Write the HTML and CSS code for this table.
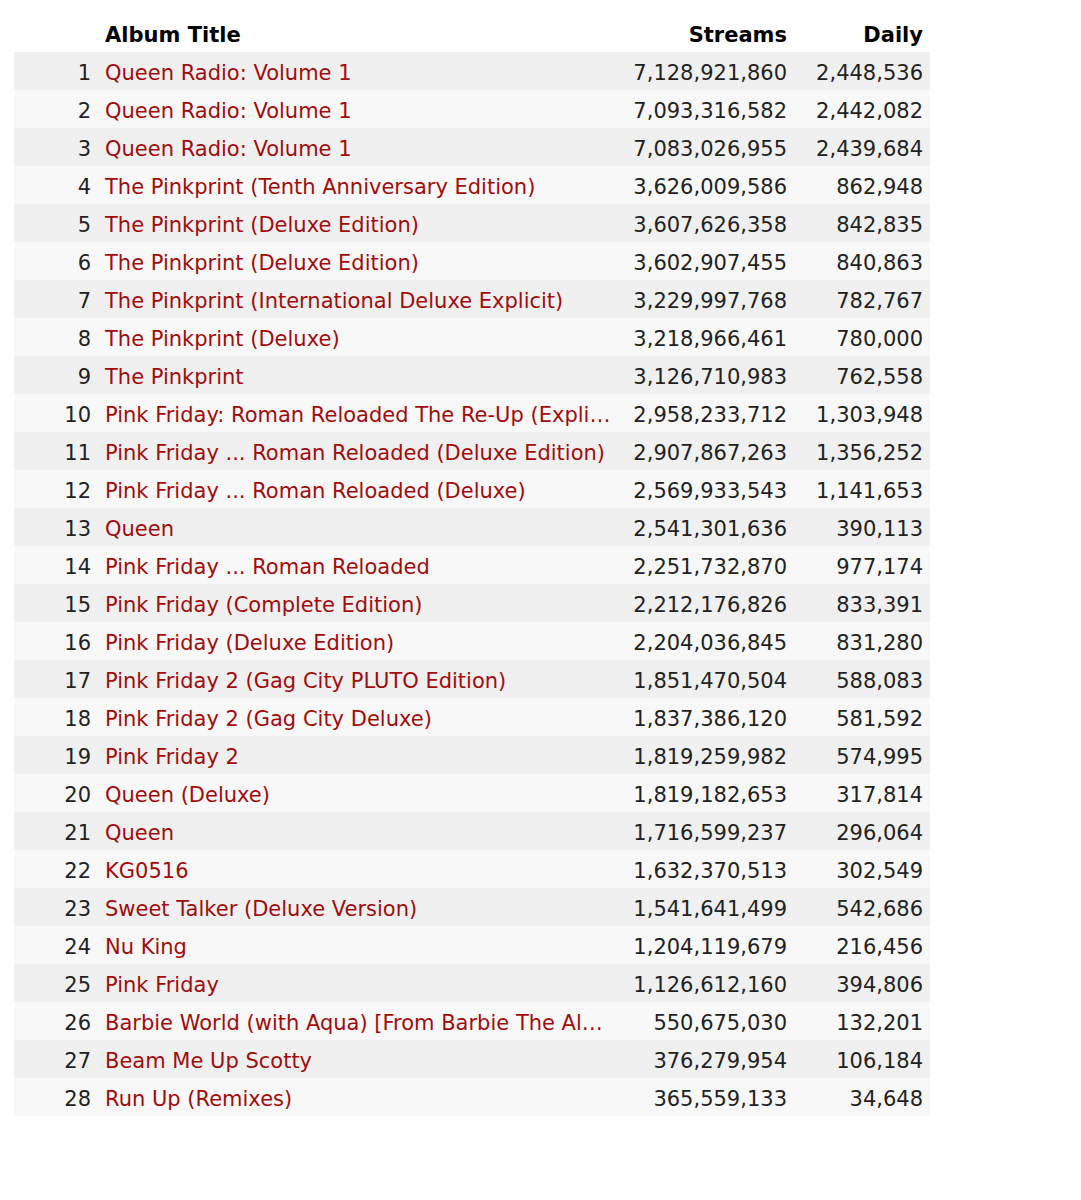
FILE: index.html
```html
<!DOCTYPE html>
<html>
<head>
<meta charset="utf-8">
<link rel="stylesheet" href="styles.css">
</head>
<body>
<div class="table">
  <div class="row head"><div class="rank"></div><div class="title">Album Title</div><div class="num">Streams</div><div class="num">Daily</div></div>
  <div class="row"><div class="rank">1</div><div class="title">Queen Radio: Volume 1</div><div class="num">7,128,921,860</div><div class="num">2,448,536</div></div>
  <div class="row"><div class="rank">2</div><div class="title">Queen Radio: Volume 1</div><div class="num">7,093,316,582</div><div class="num">2,442,082</div></div>
  <div class="row"><div class="rank">3</div><div class="title">Queen Radio: Volume 1</div><div class="num">7,083,026,955</div><div class="num">2,439,684</div></div>
  <div class="row"><div class="rank">4</div><div class="title">The Pinkprint (Tenth Anniversary Edition)</div><div class="num">3,626,009,586</div><div class="num">862,948</div></div>
  <div class="row"><div class="rank">5</div><div class="title">The Pinkprint (Deluxe Edition)</div><div class="num">3,607,626,358</div><div class="num">842,835</div></div>
  <div class="row"><div class="rank">6</div><div class="title">The Pinkprint (Deluxe Edition)</div><div class="num">3,602,907,455</div><div class="num">840,863</div></div>
  <div class="row"><div class="rank">7</div><div class="title">The Pinkprint (International Deluxe Explicit)</div><div class="num">3,229,997,768</div><div class="num">782,767</div></div>
  <div class="row"><div class="rank">8</div><div class="title">The Pinkprint (Deluxe)</div><div class="num">3,218,966,461</div><div class="num">780,000</div></div>
  <div class="row"><div class="rank">9</div><div class="title">The Pinkprint</div><div class="num">3,126,710,983</div><div class="num">762,558</div></div>
  <div class="row"><div class="rank">10</div><div class="title">Pink Friday: Roman Reloaded The Re-Up (Explicit)</div><div class="num">2,958,233,712</div><div class="num">1,303,948</div></div>
  <div class="row"><div class="rank">11</div><div class="title">Pink Friday ... Roman Reloaded (Deluxe Edition)</div><div class="num">2,907,867,263</div><div class="num">1,356,252</div></div>
  <div class="row"><div class="rank">12</div><div class="title">Pink Friday ... Roman Reloaded (Deluxe)</div><div class="num">2,569,933,543</div><div class="num">1,141,653</div></div>
  <div class="row"><div class="rank">13</div><div class="title">Queen</div><div class="num">2,541,301,636</div><div class="num">390,113</div></div>
  <div class="row"><div class="rank">14</div><div class="title">Pink Friday ... Roman Reloaded</div><div class="num">2,251,732,870</div><div class="num">977,174</div></div>
  <div class="row"><div class="rank">15</div><div class="title">Pink Friday (Complete Edition)</div><div class="num">2,212,176,826</div><div class="num">833,391</div></div>
  <div class="row"><div class="rank">16</div><div class="title">Pink Friday (Deluxe Edition)</div><div class="num">2,204,036,845</div><div class="num">831,280</div></div>
  <div class="row"><div class="rank">17</div><div class="title">Pink Friday 2 (Gag City PLUTO Edition)</div><div class="num">1,851,470,504</div><div class="num">588,083</div></div>
  <div class="row"><div class="rank">18</div><div class="title">Pink Friday 2 (Gag City Deluxe)</div><div class="num">1,837,386,120</div><div class="num">581,592</div></div>
  <div class="row"><div class="rank">19</div><div class="title">Pink Friday 2</div><div class="num">1,819,259,982</div><div class="num">574,995</div></div>
  <div class="row"><div class="rank">20</div><div class="title">Queen (Deluxe)</div><div class="num">1,819,182,653</div><div class="num">317,814</div></div>
  <div class="row"><div class="rank">21</div><div class="title">Queen</div><div class="num">1,716,599,237</div><div class="num">296,064</div></div>
  <div class="row"><div class="rank">22</div><div class="title">KG0516</div><div class="num">1,632,370,513</div><div class="num">302,549</div></div>
  <div class="row"><div class="rank">23</div><div class="title">Sweet Talker (Deluxe Version)</div><div class="num">1,541,641,499</div><div class="num">542,686</div></div>
  <div class="row"><div class="rank">24</div><div class="title">Nu King</div><div class="num">1,204,119,679</div><div class="num">216,456</div></div>
  <div class="row"><div class="rank">25</div><div class="title">Pink Friday</div><div class="num">1,126,612,160</div><div class="num">394,806</div></div>
  <div class="row"><div class="rank">26</div><div class="title">Barbie World (with Aqua) [From Barbie The Album]</div><div class="num">550,675,030</div><div class="num">132,201</div></div>
  <div class="row"><div class="rank">27</div><div class="title">Beam Me Up Scotty</div><div class="num">376,279,954</div><div class="num">106,184</div></div>
  <div class="row"><div class="rank">28</div><div class="title">Run Up (Remixes)</div><div class="num">365,559,133</div><div class="num">34,648</div></div>
</div>
</body>
</html>
```
FILE: styles.css
```css
html, body {
  background: #ffffff;
}
body {
  margin: 14px;
  font-family: "DejaVu Sans", Verdana, sans-serif;
  font-size: 21px;
  color: #222222;
}
.table {
  width: 916px;
  display: flex;
  flex-direction: column;
}
.row {
  display: grid;
  grid-template-columns: 84px 524px 172px 136px;
  height: 38px;
  box-sizing: border-box;
  padding-top: 4px;
  line-height: 34px;
}
.row:nth-child(even) {
  background: #f0f0f0;
}
.row:nth-child(odd) {
  background: #f8f8f8;
}
.row.head {
  background: #ffffff;
  font-weight: bold;
  color: #000000;
}
.row > div {
  padding: 0 7px;
  white-space: nowrap;
  overflow: hidden;
}
.rank {
  text-align: right;
}
.title {
  color: #a30b0b;
  text-overflow: ellipsis;
}
.head .title {
  color: #000000;
}
.num {
  text-align: right;
}
```
